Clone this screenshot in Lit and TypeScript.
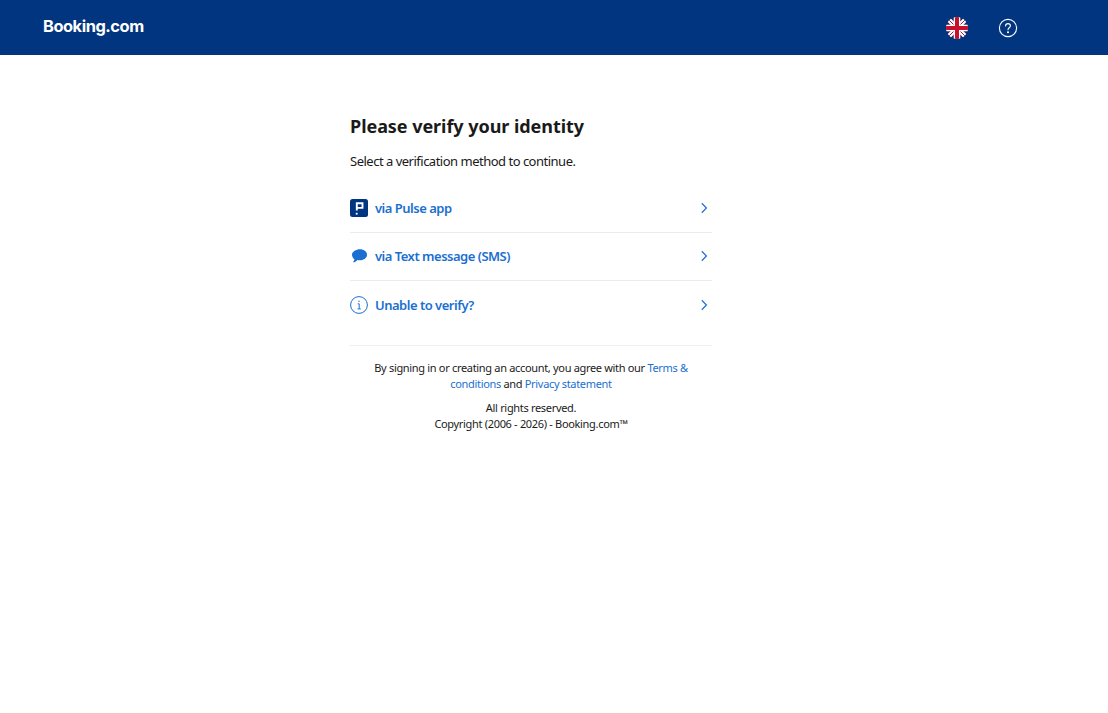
import { LitElement, html, css, svg } from "lit";
import { customElement } from "lit/decorators.js";

const chevron = svg`<svg class="chev" width="16" height="16" viewBox="0 0 16 16" fill="none"><path d="M5.8 3.2 10.400 8l-4.600 4.800" stroke="#2474d4" stroke-width="1.300"/></svg>`;

@customElement("app-root")
export class AppRoot extends LitElement {
  static styles = css`
    :host { display: block; min-height: 713px; background: #fff; color: #1a1a1a;
      font-family: "Noto Sans", "Open Sans", sans-serif; }
    a { color: #1a6fd0; text-decoration: none; }
    header { height: 55px; background: #02357f; display: flex; align-items: center; padding-left: 43px; padding-right: 90px; box-sizing: border-box; }
    .logo { color: #fff; font-family: "Inter", sans-serif; font-weight: 700; font-size: 16.4px; letter-spacing: -0.45px; flex: 1; position: relative; top: -2px; }
    .tools { display: flex; align-items: center; gap: 30px; }
    .tools svg { display: block; }
    main { width: 362px; margin-left: 350px; padding-top: 59px; }
    h1 { margin: 0; font-size: 18px; line-height: 24px; font-weight: 700; color: #1a1a1a; letter-spacing: -0.05px; }
    .sub { margin: 13px 0; font-size: 13px; line-height: 20px; letter-spacing: -0.5px; }
    .row { height: 47.5px; display: flex; align-items: center; gap: 7px; border-bottom: 1px solid #e9edf1; font-size: 13px; font-weight: 600; letter-spacing: -0.5px; color: #1a6fd0; }
    .row:last-of-type { border-bottom: 0; }
    .row .ic { width: 18px; height: 18px; flex: none; display: block; }
    .row span { flex: 1; }
    .chev { flex: none; }
    .foot { border-top: 1px solid #eceff2; margin-top: 16.5px; padding-top: 14px; text-align: center; font-size: 11px; line-height: 16px; letter-spacing: -0.32px; color: #1a1a1a; }
    .foot p { margin: 0 20px 8px; }
    .foot p:last-child { margin: 0; }
  `;

  render() {
    return html`
      <header>
        <div class="logo">Booking.com</div>
        <div class="tools">
          <svg width="22" height="22" viewBox="0 0 22 22">
            <defs><clipPath id="c"><circle cx="11" cy="11" r="11"/></clipPath></defs>
            <g clip-path="url(#c)">
              <rect width="22" height="22" fill="#1d2a66"/>
              <path d="M0 1.500 20.500 22M1.500 0 22 20.500M22 1.500 1.500 22M20.500 0 0 20.500" stroke="#fff" stroke-width="2.600"/>
              <path d="M0 0 22 22M22 0 0 22" stroke="#c8102e" stroke-width="1"/>
              <rect x="7.700" width="6.600" height="22" fill="#fff"/><rect y="7.700" width="22" height="6.600" fill="#fff"/>
              <rect x="9" width="4" height="22" fill="#c8102e"/><rect y="9" width="22" height="4" fill="#c8102e"/>
            </g>
          </svg>
          <svg width="20" height="20" viewBox="0 0 20 20" fill="none" stroke="#fff" stroke-width="1.100" stroke-linecap="round">
            <circle cx="10" cy="10" r="8.600"/>
            <path d="M7.600 7.900C7.600 6.500 8.700 5.600 10 5.600s2.400.9 2.400 2.200c0 1.900-2.400 2-2.400 4"/>
            <circle cx="10" cy="14.200" r=".5" fill="#fff"/>
          </svg>
        </div>
      </header>
      <main>
        <h1>Please verify your identity</h1>
        <p class="sub">Select a verification method to continue.</p>
        <a class="row">
          <svg class="ic" viewBox="0 0 18 18">
            <rect width="18" height="18" rx="2.500" fill="#003580"/>
            <path d="M6.800 11.500V4.300h5.700v4.600H6.800" fill="none" stroke="#fff" stroke-width="1.900"/>
            <rect x="5.800" y="13.800" width="1.800" height="1.800" fill="#fff"/>
          </svg>
          <span>via Pulse app</span>${chevron}
        </a>
        <a class="row">
          <svg class="ic" viewBox="0 0 18 18">
            <path d="M10 2.300c3.900 0 7 2.400 7 5.500s-3.100 5.500-7 5.500c-.9 0-1.800-.1-2.600-.4C6.200 14.400 4.700 15.300 3 15.300c.8-.8 1.300-1.900 1.500-3C3 11.300 2 9.700 2 7.800c0-3.100 4.100-5.500 8-5.500z" fill="#1a6fd0"/>
          </svg>
          <span>via Text message (SMS)</span>${chevron}
        </a>
        <a class="row">
          <svg class="ic" viewBox="0 0 18 18" fill="none" stroke="#1a6fd0" stroke-width="1">
            <circle cx="9" cy="9" r="8.400"/>
            <path d="M7.700 7.800H9.200V12.700M7.500 12.900H10.800"/>
            <circle cx="9" cy="5.200" r=".7" fill="#1a6fd0" stroke="none"/>
          </svg>
          <span>Unable to verify?</span>${chevron}
        </a>
        <div class="foot">
          <p>By signing in or creating an account, you agree with our <a>Terms &amp; conditions</a> and <a>Privacy statement</a></p>
          <p>All rights reserved.<br>Copyright (2006 - 2026) - Booking.com™</p>
        </div>
      </main>
    `;
  }
}
